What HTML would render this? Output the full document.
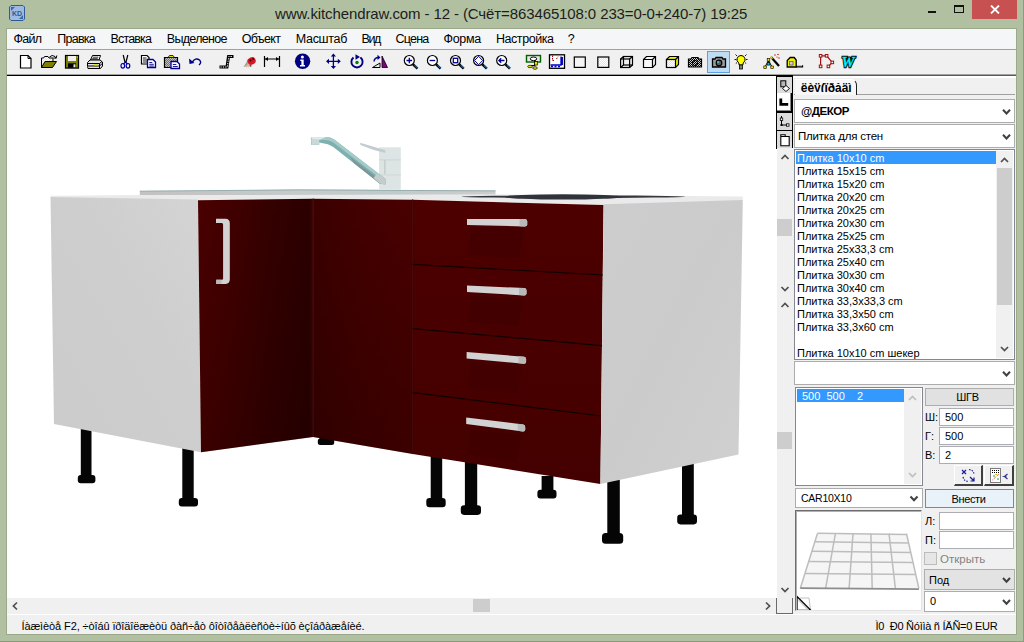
<!DOCTYPE html>
<html lang="ru">
<head>
<meta charset="utf-8">
<title>www.kitchendraw.com - 12</title>
<style>
*{box-sizing:border-box;margin:0;padding:0}
html,body{width:1024px;height:642px;overflow:hidden}
body{background:#b2c0a2;font-family:"Liberation Sans",sans-serif;font-size:11px;color:#000;position:relative}
.a{position:absolute}
.t{position:absolute;white-space:nowrap;line-height:1}
#title{left:275px;top:6px;font-size:15px;color:#1c1c1c;letter-spacing:-0.11px}
#menubar{left:7px;top:29px;width:1009px;height:20px;background:#f5f6f7}
#menubar .t{top:3.500px;font-size:12.5px}
#tbline{left:7px;top:49px;width:1009px;height:1px;background:#a0a0a0}
#toolbar{left:7px;top:50px;width:1009px;height:24px;background:#f0f0f0}
#tbdark{left:7px;top:74px;width:1009px;height:2px;background:#000;border-top:1px solid #a0a0a0}
#cframe{left:6px;top:28px;width:1011px;height:607px;background:#9ba98a}
#view{left:7px;top:76px;width:769px;height:522px;background:#fff}
#hscroll{left:7px;top:598px;width:769px;height:16px;background:#f0f0f0}
#status{left:7px;top:615px;width:1009px;height:19px;background:#f0f0f0}
#statusline{left:7px;top:614px;width:1009px;height:1px;background:#fff}
#panel{left:776px;top:76px;width:240px;height:538px;background:#f0f0f0}
.inp{position:absolute;background:#fff;border:1px solid #abadb3}
.cmb{position:absolute;background:#fff;border:1px solid #acacac}
.btn{position:absolute;background:#e1e1e1;border:1px solid #adadad;text-align:center}
.li{position:absolute;left:797px;white-space:nowrap;font-size:11px;line-height:13px;height:13px;margin-top:1px}
</style>
</head>
<body>

<!-- window chrome -->
<div class="a" style="left:1023px;top:0;width:1px;height:642px;background:#8d9b7d"></div>
<div class="a" style="left:0;top:641px;width:1024px;height:1px;background:#8d9b7d"></div>
<svg class="a" style="left:9px;top:5px" width="16" height="16" viewBox="0 0 16 16">
  <path d="M2 0.5h12l1.5 1.5v12l-1.5 1.5h-12l-1.5-1.5v-12z" fill="#9dbbe0" stroke="#2f5a97" stroke-width="1"/>
  <path d="M2 2h4l-4 4z" fill="#3a68a8"/><path d="M14 14h-4l4-4z" fill="#3a68a8"/>
  <text x="8" y="11" font-family="Liberation Sans, sans-serif" font-size="7" font-weight="bold" fill="#2f5a97" text-anchor="middle">KD</text>
</svg>
<div id="title" class="t">www.kitchendraw.com - 12 - (Счёт=863465108:0 233=0-0+240-7) 19:25</div>
<div class="a" style="left:928px;top:11px;width:8px;height:2px;background:#111"></div>
<div class="a" style="left:954px;top:5px;width:10px;height:8px;border:1px solid #111;border-top-width:2px"></div>
<div class="a" style="left:972px;top:0;width:45px;height:19px;background:#c75050"></div>
<svg class="a" style="left:990px;top:5px" width="10" height="9" viewBox="0 0 10 9"><path d="M1 0.5l8 8M9 0.5l-8 8" stroke="#fff" stroke-width="1.8"/></svg>
<div id="cframe" class="a"></div>
<div id="menubar" class="a">
  <span class="t" style="left:6.6px;letter-spacing:-0.74px">Файл</span>
  <span class="t" style="left:50.3px;letter-spacing:-0.75px">Правка</span>
  <span class="t" style="left:103.6px;letter-spacing:-0.86px">Вставка</span>
  <span class="t" style="left:159.8px;letter-spacing:-0.69px">Выделеное</span>
  <span class="t" style="left:234.7px;letter-spacing:-0.64px">Объект</span>
  <span class="t" style="left:288.8px;letter-spacing:-0.31px">Масштаб</span>
  <span class="t" style="left:354.6px;letter-spacing:-1.46px">Вид</span>
  <span class="t" style="left:388.6px;letter-spacing:-0.81px">Сцена</span>
  <span class="t" style="left:436.5px;letter-spacing:-0.34px">Форма</span>
  <span class="t" style="left:488.9px;letter-spacing:-0.42px">Настройка</span>
  <span class="t" style="left:560.7px;letter-spacing:0px">?</span>
</div>
<div id="tbline" class="a"></div>
<div id="toolbar" class="a"></div>
<div id="tbdark" class="a"></div>
<div id="view" class="a"></div>
<div id="hscroll" class="a"></div>
<div id="statusline" class="a"></div>
<div id="status" class="a">
  <span class="t" style="left:14.500px;top:5.500px;font-size:11px;letter-spacing:-0.110px">Íàæìèòå F2, ÷òîáû ïðîäîëæèòü ðàñ÷åò ôîòîðåàëèñòè÷íûõ èçîáðàæåíèé.</span>
  <span class="t" style="left:868.500px;top:5.500px;font-size:11px;letter-spacing:-0.260px">Ì0&nbsp; Ð0 Ñóììà ñ ÍÄÑ=0 EUR</span>
</div>
<div id="panel" class="a"></div>

<!-- toolbar icons -->
<svg class="a" style="left:7px;top:50px" width="1010" height="24" viewBox="7 50 1010 24">
  <defs>
    <pattern id="dy" width="2" height="2" patternUnits="userSpaceOnUse"><rect width="2" height="2" fill="#ffff00"/><rect width="1" height="1" fill="#fff"/><rect x="1" y="1" width="1" height="1" fill="#fff"/></pattern>
    <pattern id="dk" width="2" height="2" patternUnits="userSpaceOnUse"><rect width="2" height="2" fill="#808000"/><rect width="1" height="1" fill="#c0c0c0"/><rect x="1" y="1" width="1" height="1" fill="#c0c0c0"/></pattern>
    <pattern id="dc" width="2" height="2" patternUnits="userSpaceOnUse"><rect width="2" height="2" fill="#000"/><rect width="1" height="1" fill="#d0d0d0"/><rect x="1" y="1" width="1" height="1" fill="#d0d0d0"/></pattern>
  </defs>
  <!-- new -->
  <path d="M20.5 55.5h7.5l3 3v9.5h-10.500z" fill="#fff" stroke="#000" stroke-width="1.2"/><path d="M28 55.500v3h3" fill="none" stroke="#000" stroke-width="1"/>
  <!-- open -->
  <path d="M41.500 67.500v-9.500h2l1-1.500h3.500l1 1.500h4v3" fill="url(#dy)" stroke="#000" stroke-width="1"/>
  <path d="M41.500 67.500l3.500-6h11.500l-4 6z" fill="#808000" stroke="#000" stroke-width="1"/>
  <path d="M49.500 57q2.500-2.800 5.500-0.500l1 1.500m0.800-2.500l-0.600 2.800-2.700-0.500" fill="none" stroke="#000" stroke-width="1"/>
  <!-- save -->
  <rect x="65.500" y="55.500" width="13" height="12.600" fill="#808000" stroke="#000" stroke-width="1.200"/>
  <rect x="68" y="56" width="8" height="5" fill="#f0f0f0"/><rect x="68" y="63.300" width="8" height="4.500" fill="#000"/><rect x="73.500" y="64.300" width="2" height="3" fill="#e8e8e8"/><rect x="76.800" y="56.500" width="1" height="1.200" fill="#d0d0d0"/>
  <!-- print -->
  <path d="M90.500 60l2-4.500h8l-1.500 4.500z" fill="#fff" stroke="#000" stroke-width="1"/>
  <path d="M92.800 57.200h5.500M92.200 58.700h5.500" stroke="#000" stroke-width="0.800"/>
  <path d="M87.500 62.500l2.500-2.500h10l2.500 2v4l-2 2.500h-12.500l-0.500-2z" fill="#e4e4e4" stroke="#000" stroke-width="1"/>
  <path d="M88 63.500h11.500l2.500-2M88 66h11.500l2.500-2.200M99.500 63.500v5" fill="none" stroke="#000" stroke-width="1"/>
  <rect x="94" y="64.200" width="4" height="1.300" fill="#e0e000"/>
  <!-- cut -->
  <path d="M123.200 55l2 8M127.800 55l-2 8" stroke="#000" stroke-width="1.200" fill="none"/>
  <ellipse cx="122.800" cy="65.800" rx="1.800" ry="2.300" fill="none" stroke="#0000a0" stroke-width="1.200"/><ellipse cx="128" cy="65.800" rx="1.800" ry="2.300" fill="none" stroke="#0000a0" stroke-width="1.200"/>
  <path d="M125 62.500l-1.600 1.500M126 62.500l1.500 1.500" stroke="#0000a0" stroke-width="1.200"/>
  <!-- copy -->
  <path d="M141.500 55.500h5.500l2 2v6.500h-7.500z" fill="#fff" stroke="#000" stroke-width="1.200"/><path d="M143 58h3.500M143 60h4M143 62h4" stroke="#000" stroke-width="0.900"/>
  <path d="M147.500 59.500h5.500l2.500 2.500v5.500h-8z" fill="#fff" stroke="#000090" stroke-width="1.300"/><path d="M149.300 62.500h3M149.300 64.300h4.500M149.300 66h4.500" stroke="#000090" stroke-width="0.900"/>
  <!-- paste -->
  <path d="M164.500 57.500h13v10h-13z" fill="url(#dk)" stroke="#000" stroke-width="1.200"/>
  <path d="M168 57.500l1.500-2h3.500l1.500 2z" fill="#e8e000" stroke="#000" stroke-width="0.800"/>
  <path d="M171 61.500h6l2.500 2.500v4.500h-8.500z" fill="#fff" stroke="#000090" stroke-width="1.300"/><path d="M172.800 64.500h3.500M172.800 66.500h5" stroke="#000090" stroke-width="0.900"/>
  <!-- undo -->
  <path d="M192 62.500q3.500-5.500 7.500-2.500q2.500 2.500-0.500 5" fill="none" stroke="#000090" stroke-width="1.400"/><path d="M189 58.500l0.500 5.500 5-1z" fill="#000090"/>
  <!-- steps -->
  <path d="M219.500 67h7.500l1.500-10.500h5" fill="none" stroke="#000" stroke-width="3"/>
  <path d="M220.500 67h6.800l1.500-10.500h4" fill="none" stroke="#fff" stroke-width="1" stroke-dasharray="1.200 1.200"/>
  <!-- bug -->
  <path d="M245.500 56l1.500 5.500-3.500 5.500 4-1.500 1.500 2.500z" fill="#9a9a9a"/>
  <ellipse cx="251.500" cy="61" rx="4.300" ry="3.700" fill="#d01828" transform="rotate(-25 251.500 61)"/>
  <path d="M248.500 63.500l-3.500 2.500 1 1.500 3.500-2z" fill="#e8b090"/>
  <circle cx="250.500" cy="60.500" r="1" fill="#400"/><circle cx="253.200" cy="59" r="0.900" fill="#400"/><circle cx="250.500" cy="65.800" r="1.100" fill="#606060"/>
  <!-- dimension -->
  <path d="M264.500 56v11M279.500 56v11M265 59h14" stroke="#000" stroke-width="1.200" fill="none"/><path d="M265 59l3-2v4zM279 59l-3-2v4z" fill="#000"/>
  <!-- info -->
  <circle cx="302.600" cy="61.300" r="7.700" fill="#000080"/>
  <circle cx="302.400" cy="57" r="1.500" fill="#fff"/><path d="M300.300 59.500h3.400v5.600h1.300v1.400h-5v-1.400h1.400v-4.200h-1.100z" fill="#fff"/>
  <!-- move -->
  <path d="M333.400 55v12.500M327 61.300h12.800" stroke="#000080" stroke-width="1.300"/>
  <path d="M333.400 53.600l2.600 3h-5.200zM333.400 69l2.600-3h-5.200zM326 61.300l3-2.600v5.200zM340.800 61.300l-3-2.600v5.200z" fill="#000080"/>
  <!-- rotate -->
  <path d="M353.500 57.500a5.600 5.600 0 1 0 7 0" fill="none" stroke="#000080" stroke-width="1.900"/>
  <path d="M355.500 54.200l4.500 2.800-4.500 2.800z" fill="#000080"/><circle cx="357" cy="62.500" r="1.700" fill="#008000"/>
  <path d="M360.500 57.500l1.500 1.500" stroke="#000080" stroke-width="1" stroke-dasharray="1 1"/>
  <!-- mirror -->
  <path d="M372.500 67.500h7.500v-4.500z" fill="#f0f0f0" stroke="#000" stroke-width="1"/><path d="M382 67.500v-11.500l5.500 11.500z" fill="#800080" stroke="#000" stroke-width="0.800"/>
  <path d="M374 61.500q0.500-4 4.500-4" fill="none" stroke="#000090" stroke-width="1.400"/><path d="M377.500 54.800l3 2.700-3 2.500z" fill="#000090"/>
  <!-- zooms -->
  <g fill="#fff" stroke="#000" stroke-width="1.200">
    <circle cx="409.300" cy="60.500" r="5"/><circle cx="432.400" cy="60.500" r="5"/><circle cx="455.500" cy="60.500" r="5"/><circle cx="478.600" cy="60.500" r="5"/><circle cx="501.700" cy="60.500" r="5"/>
  </g>
  <g stroke="#000" stroke-width="2.400"><path d="M413 64.300l4.500 4.300M436.100 64.300l4.500 4.300M459.200 64.300l4.500 4.300M482.300 64.300l4.500 4.300M505.400 64.300l4.500 4.300"/></g>
  <g stroke="#0060c0" stroke-width="1.200"><path d="M414.500 65.300l3.200 3.100M437.600 65.300l3.200 3.100M460.700 65.300l3.200 3.100M483.800 65.300l3.200 3.100M506.900 65.300l3.200 3.100"/></g>
  <g stroke="#000090" stroke-width="1.300" fill="none">
    <path d="M406.500 60.500h5.600M409.300 57.700v5.600"/>
    <path d="M429.600 60.500h5.600"/>
    <rect x="453.300" y="58.300" width="4.400" height="4.400"/>
    <path d="M478.600 56.300l4 4.200-4 4.200-4-4.200z" stroke-width="1"/>
    <path d="M499 60.500h5.500M501.200 58.300l-2.300 2.200 2.300 2.200"/>
  </g>
  <!-- icon A -->
  <rect x="526.500" y="55.500" width="14" height="6.500" fill="#e8e8e8" stroke="#006000" stroke-width="1.400"/>
  <ellipse cx="533.500" cy="58.800" rx="3.200" ry="1.800" fill="#fff" stroke="#000" stroke-width="1"/>
  <path d="M535 60v5.500h-4" fill="none" stroke="#000" stroke-width="1"/>
  <rect x="534.500" y="61.500" width="3" height="3.500" fill="#e8e000" stroke="#000" stroke-width="0.700"/><ellipse cx="530" cy="66.500" rx="2.300" ry="1.200" fill="#e8e000" stroke="#000" stroke-width="0.700"/><ellipse cx="535" cy="68" rx="2.300" ry="1.300" fill="#e8e000" stroke="#000" stroke-width="0.700"/>
  <!-- icon B -->
  <rect x="549.500" y="54.800" width="15" height="13.500" fill="#fff" stroke="#000" stroke-width="1.300"/>
  <path d="M552.500 55.500v5h2.500M556.500 59l1.500-2.500" fill="none" stroke="#a00000" stroke-width="1" stroke-dasharray="1.500 1"/>
  <path d="M550.500 65h10.500v-8.500M562.300 57v8" fill="none" stroke="#0000c0" stroke-width="1.300"/><path d="M551 66.500h2M554.500 66.500h2M558 66.500h2" stroke="#0000c0" stroke-width="1.600"/>
  <!-- squares -->
  <rect x="574.300" y="57" width="11" height="10.400" fill="#f4f4f4" stroke="#000" stroke-width="1.200"/>
  <rect x="597.800" y="57" width="11" height="10.400" fill="url(#dy)" stroke="#000" stroke-width="1.200"/>
  <!-- wire cube -->
  <g fill="none" stroke="#000" stroke-width="1.200"><rect x="620.600" y="59" width="9" height="8.500"/><rect x="623.500" y="56.500" width="9" height="8.500"/><path d="M620.600 59l2.900-2.500M629.600 59l2.900-2.500M620.600 67.500l2.900-2.500M629.600 67.500l2.900-2.500"/></g>
  <!-- white cube -->
  <path d="M643.500 59.500l3-3h9v8l-3 3h-9z" fill="#f8f8f8" stroke="#000" stroke-width="1.200"/><path d="M643.500 59.500h9v8M652.500 59.500l3-3" fill="none" stroke="#000" stroke-width="1.200"/>
  <!-- yellow cube -->
  <path d="M666.500 59.500l3-3h9v8l-3 3h-9z" fill="#f0f000" stroke="#000" stroke-width="1.200"/><rect x="666.500" y="59.500" width="9" height="8" fill="url(#dy)" stroke="#000" stroke-width="1.200"/><path d="M675.500 59.500l3-3" stroke="#000" stroke-width="1.200"/>
  <!-- camera dithered -->
  <path d="M688.500 59h2.500l1-1.500h6l1 1.500h2.500v8h-13z" fill="url(#dc)" stroke="#000" stroke-width="1.200"/><circle cx="695" cy="63" r="2.600" fill="url(#dc)" stroke="#000" stroke-width="1"/>
  <!-- selected camera -->
  <rect x="707.500" y="51.500" width="22" height="21" fill="#c0dcf3" stroke="#5aa0e6" stroke-width="1"/>
  <path d="M712.500 59h2.500l1-1.500h6l1 1.500h2.500v8h-13z" fill="#9a9a9a" stroke="#000" stroke-width="1.300"/><circle cx="719" cy="63" r="2.800" fill="#606060" stroke="#000" stroke-width="1.200"/><circle cx="718" cy="62" r="0.900" fill="#40e0e0"/>
  <!-- bulb -->
  <path d="M741 55.500a4 4 0 0 1 2.300 7.300l-0.500 2.200h-3.600l-0.500-2.200a4 4 0 0 1 2.300-7.300z" fill="#ffff00" stroke="#000" stroke-width="1"/>
  <rect x="739.600" y="65" width="2.800" height="4" fill="#808080" stroke="#000" stroke-width="0.800"/>
  <path d="M734.500 59.500h1.800M745.800 59.500h1.800M735.500 54.500l1.500 1.500M746.500 54.500l-1.500 1.500M735.800 63.500l1.300-1M746.200 63.500l-1.300-1" stroke="#000" stroke-width="0.900"/>
  <!-- wand -->
  <path d="M771 57l8 9" stroke="#000" stroke-width="2.200"/><path d="M770.500 56.500l2 2.200" stroke="#f0e000" stroke-width="1.500"/>
  <path d="M768.500 60.500l-3.500 6.500M768.500 60.500l3.500 6.500M768.500 60.500v3" stroke="#000" stroke-width="1" fill="none"/>
  <rect x="763.800" y="66" width="2.600" height="2.600" fill="#f0e000" stroke="#000" stroke-width="0.600"/><rect x="770.800" y="66" width="2.600" height="2.600" fill="#f0e000" stroke="#000" stroke-width="0.600"/><rect x="767.200" y="62.500" width="2.600" height="2.600" fill="#00c0e0" stroke="#000" stroke-width="0.600"/><rect x="767.200" y="58.500" width="2.600" height="2.600" fill="#f0e000" stroke="#000" stroke-width="0.600"/>
  <circle cx="775" cy="55" r="0.700" fill="#c00000"/><circle cx="778" cy="54.500" r="0.700" fill="#c00000"/><circle cx="779" cy="58" r="0.700" fill="#c00000"/><circle cx="777" cy="57" r="0.600" fill="#c00000"/>
  <!-- tape -->
  <path d="M787.200 67v-6.500l3-3h4l2 2.500v7z" fill="#f0f000" stroke="#000" stroke-width="1.300"/><rect x="789.500" y="61.500" width="3.500" height="3.500" fill="#d0d0d0" stroke="#606060" stroke-width="0.800"/>
  <path d="M796 66.800h6.500v-1.500" fill="none" stroke="#000" stroke-width="1.300"/><path d="M797 65.500h4.500" stroke="#c0c0c0" stroke-width="1"/>
  <!-- red polygon -->
  <path d="M820.600 66.400v-10.600h6l5.700 6.600-3.900 4" fill="none" stroke="#a01010" stroke-width="1.200"/>
  <g fill="#f4f4f4" stroke="#a01010" stroke-width="1"><rect x="819.300" y="54.500" width="2.600" height="2.600"/><rect x="825.300" y="54.500" width="2.600" height="2.600"/><rect x="831" y="61.100" width="2.600" height="2.600"/><rect x="827.100" y="65.100" width="2.600" height="2.600"/><rect x="819.300" y="65.100" width="2.600" height="2.600"/></g>
  <!-- W -->
  <text x="841.500" y="66.800" font-family="Liberation Serif, serif" font-size="15" font-weight="bold" font-style="italic" fill="#000" stroke="#000" stroke-width="2.400" textLength="13" lengthAdjust="spacingAndGlyphs">W</text><text x="841.500" y="66.800" font-family="Liberation Serif, serif" font-size="15" font-weight="bold" font-style="italic" fill="#00f0f8" stroke="#00f0f8" stroke-width="0.300" textLength="13" lengthAdjust="spacingAndGlyphs">W</text>
</svg>

<!-- 3D scene -->
<svg class="a" style="left:7px;top:76px" width="769" height="522" viewBox="7 76 769 522">
  <defs>
    <linearGradient id="gDoor" x1="0" y1="0" x2="1" y2="0">
      <stop offset="0" stop-color="#4a0000"/><stop offset="0.25" stop-color="#430000"/><stop offset="0.6" stop-color="#360000"/><stop offset="0.97" stop-color="#2c0000"/><stop offset="1" stop-color="#3a0606"/>
    </linearGradient>
    <linearGradient id="gFill" x1="0" y1="0" x2="1" y2="0">
      <stop offset="0" stop-color="#3b0000"/><stop offset="0.5" stop-color="#440000"/><stop offset="1" stop-color="#490000"/>
    </linearGradient>
    <linearGradient id="gDraw" x1="0" y1="0" x2="0" y2="1">
      <stop offset="0" stop-color="#4d0000"/><stop offset="1" stop-color="#440000"/>
    </linearGradient>
    <linearGradient id="gShade" x1="0" y1="0" x2="0" y2="1">
      <stop offset="0" stop-color="#000" stop-opacity="0"/><stop offset="1" stop-color="#000" stop-opacity="0.2"/>
    </linearGradient>
    <linearGradient id="gSideL" x1="0" y1="1" x2="1" y2="0">
      <stop offset="0" stop-color="#cbcbcb"/><stop offset="0.6" stop-color="#cecece"/><stop offset="1" stop-color="#d4d4d4"/>
    </linearGradient>
    <linearGradient id="gSideR" x1="0" y1="0" x2="1" y2="1">
      <stop offset="0" stop-color="#cdcdcd"/><stop offset="0.5" stop-color="#cbcbcb"/><stop offset="1" stop-color="#d0d0d0"/>
    </linearGradient>
    <linearGradient id="gRim" x1="0" y1="0" x2="1" y2="0">
      <stop offset="0" stop-color="#c2c2c2"/><stop offset="0.45" stop-color="#c6caca"/><stop offset="0.7" stop-color="#c0caca"/><stop offset="1" stop-color="#cccccc"/>
    </linearGradient>
  </defs>
  <!-- legs (behind) -->
  <g fill="#050505">
    <rect x="80.8" y="428" width="10.7" height="50"/><rect x="77.8" y="475" width="17.6" height="8.2" rx="3"/>
    <rect x="182.3" y="448" width="11.4" height="52"/><rect x="178.8" y="498" width="19.2" height="8.6" rx="3"/>
    <rect x="319.5" y="436" width="13" height="5"/><rect x="317.8" y="438.5" width="16.4" height="6.5" rx="2.5"/>
    <rect x="430.7" y="455" width="11.5" height="46"/><rect x="426.3" y="498" width="19.4" height="9.2" rx="3.2"/>
    <rect x="464.9" y="462" width="12.3" height="46"/><rect x="460.8" y="505.3" width="20.2" height="9.6" rx="3.3"/>
    <rect x="541.6" y="476" width="11.8" height="16"/><rect x="537.4" y="489.7" width="19.1" height="8.8" rx="3"/>
    <rect x="607.3" y="480" width="12.5" height="56"/><rect x="602" y="533" width="21.2" height="10.8" rx="3.6"/>
    <rect x="682" y="462" width="11.8" height="55"/><rect x="677.2" y="514.6" width="19.8" height="9.8" rx="3.3"/>
  </g>
  <!-- worktop strip -->
  <polygon points="50.5,195.8 140,195 495,194.4 742.8,196.6 742.8,201 603.6,205 412.7,200 313,199 198,200.5 50.5,198" fill="#eaeaea"/>
  <!-- sink rim -->
  <polygon points="139.8,190.9 300,189.6 495.5,190.6 495.5,194.6 139.8,195.1" fill="url(#gRim)"/>
  <polyline points="139.8,191.2 300,189.9 495.5,190.9" fill="none" stroke="#98aeae" stroke-width="1"/>
  <!-- hob -->
  <ellipse cx="573.3" cy="196.700" rx="111.800" ry="1.300" fill="#34383c"/>
  <ellipse cx="563" cy="196.900" rx="58" ry="2.700" fill="#30343a"/>
  <!-- left side panel -->
  <polygon points="50.5,197 198,199.6 201,452.3 54,424" fill="url(#gSideL)"/>
  <!-- left door -->
  <polygon points="198,200.300 313,198.800 313,437 201,452.300" fill="url(#gDoor)"/>
  <!-- filler -->
  <polygon points="313,198.800 412.700,199.800 412.700,454.100 313,437" fill="url(#gFill)"/>
  <line x1="313.2" y1="198.3" x2="313.2" y2="437" stroke="#5a1010" stroke-width="0.8"/>
  <polygon points="198,200 313,198.3 412.7,199.3 412.7,454.1 313,437 201,452.3" fill="url(#gShade)"/>
  <!-- drawers -->
  <polygon points="412.700,199.800 603.500,205 600.400,484 412.700,454.100" fill="url(#gDraw)"/>
  <line x1="412.7" y1="199.3" x2="412.7" y2="454.1" stroke="#3c0000" stroke-width="1"/>
  <g stroke="#120000" stroke-width="1.2">
    <line x1="412.7" y1="264.4" x2="603" y2="275"/>
    <line x1="412.7" y1="328.6" x2="602" y2="345.7"/>
    <line x1="412.7" y1="392.6" x2="601" y2="416"/>
  </g>
  <!-- handle shadows -->
  <g fill="#3c0000" opacity="0.450">
    <polygon points="471,227 525,228 519,258 468,255"/>
    <polygon points="471,296 524,298 518,326 468,322"/>
    <polygon points="471,363 523,367 517,394 468,388"/>
    <polygon points="470,430 522,435 516,462 468,454"/>
  </g>
  <!-- right side panel -->
  <polygon points="603.7,204.2 742.8,200.1 738.5,454.4 600.4,484" fill="url(#gSideR)"/>
  <!-- handles -->
  <g fill="#d2d2d2">
    <path d="M216 218.8h9.5q4.3 0 4.3 4.5v56q0 4.6 -4.3 4.6h-9.2v-4.2h5.5q1.3 0 1.3 -1.5v-53.5q0 -1.6 -1.3 -1.6h-5.8z"/>
    <path d="M467 219h58q2.2 0 2.2 2.6v2.6q0 2.2 -2.6 2.2l-57.6 -1.4z"/>
    <path d="M467 285.5l57.5 2.6q2 0.2 2 2.6v2.5q0 2.3 -2.5 2.2l-57 -3.4z"/>
    <path d="M466.6 352l57.5 4.8q2 0.2 2 2.6v2.4q0 2.2 -2.5 2l-57 -5.4z"/>
    <path d="M466.2 417.6l57 6.8q2 0.3 2 2.7v2.5q0 2.2 -2.5 1.9l-56.5 -7.4z"/>
  </g>
  <g fill="#b9b9b9">
    <path d="M519.500 219h5.500q2.200 0 2.200 2.600v2.600q0 2.200 -2.600 2.200l-5.100 -0.100z"/>
    <path d="M519 287.900l5.500 0.200q2 0.200 2 2.600v2.500q0 2.300 -2.500 2.200l-5 -0.300z"/>
    <path d="M518.500 356.300l5.600 0.500q2 0.200 2 2.600v2.400q0 2.200 -2.500 2l-5.100 -0.500z"/>
    <path d="M517.700 423.700l5.500 0.700q2 0.300 2 2.700v2.500q0 2.200 -2.500 1.900l-5 -0.700z"/>
    <path d="M216.300 279.700h5.200v4.200h-5.200z"/>
  </g>
  <!-- faucet -->
  <rect x="379.1" y="147.3" width="21.7" height="42.4" fill="#dde4e4"/>
  <rect x="379.1" y="159.3" width="21.7" height="1.2" fill="#cdd6d6"/>
  <rect x="379.1" y="174.3" width="21.7" height="1.2" fill="#d0d9d9"/>
  <rect x="384" y="160" width="1.6" height="14" fill="#c4cfcf"/>
  <polygon points="360,142.8 385.4,150.2 385.4,153 373,149.8 360.6,145" fill="#c2ccd0"/>
  <path d="M310.8 138.6q0 -1.6 2.5 -1.6h13q4.8 0.2 8.6 3l51 39.2 -0.3 5.4 -5.8 -0.9 -43 -34q-4.5 -3.6 -9 -5.4l-8.6 -1.9v2.3h-8.2v-4z" fill="#7fb0b0"/>
  <path d="M312 137h14.3q4.8 0.2 8.6 3l51 39.2 -1.6 2.2 -51 -38.9q-3.5 -2.4 -7.6 -2.6l-13.8 -0.4z" fill="#a6caca"/>
  <path d="M350 157l33 25.5 -2.6 1.5 -26 -20.5z" fill="#7d9696"/>
  <polygon points="311.2,139.4 319.2,139.8 319.2,144.7 311.5,144.7" fill="#c9d9d9"/>
  <polygon points="312,137 326,137 320,139.8 311.2,139.4" fill="#dde9e9"/>
  <polygon points="377,173.5 385.9,179.2 385.6,184.6 380.3,183.8 373.5,178" fill="#c4cccc"/>
</svg>

<!-- right panel -->
<div class="a" style="left:793px;top:76px;width:223px;height:2px;background:#fff"></div>
<div class="a" style="left:793px;top:74px;width:223px;height:2px;background:#5a5a5a;border-top:1px solid #a0a0a0"></div>
<div class="a" style="left:776px;top:76px;width:1px;height:538px;background:#fff"></div>
<!-- vertical tool strip -->
<div class="a" style="left:776px;top:76px;width:17px;height:73px;background:#000"></div>
<div class="a" style="left:777px;top:77px;width:15px;height:16px;background:#dcdcdc"></div>
<div class="a" style="left:777px;top:93px;width:14px;height:18px;background:#fff;border-bottom:1px solid #888;border-right:1px solid #888"></div>
<div class="a" style="left:777px;top:113px;width:15px;height:17px;background:#dcdcdc"></div>
<div class="a" style="left:777px;top:131px;width:15px;height:17px;background:#dcdcdc"></div>
<svg class="a" style="left:777px;top:76px" width="16" height="73" viewBox="777 76 16 73">
  <rect x="780.8" y="80.8" width="5" height="6" fill="#b8b8b8" stroke="#000" stroke-width="1"/>
  <path d="M782.5 88.500l3.500-3 3.500 3-3.500 3z" fill="#fff" stroke="#000" stroke-width="0.900"/>
  <path d="M780.800 98.500v5.800h7.400" fill="none" stroke="#000" stroke-width="2.800"/>
  <path d="M781.500 116v9h6.500" fill="none" stroke="#000" stroke-width="1"/><rect x="780.300" y="118" width="2.400" height="2.400" fill="#fff" stroke="#000" stroke-width="0.800"/><rect x="786.600" y="123.800" width="2.400" height="2.400" fill="#fff" stroke="#000" stroke-width="0.800"/><rect x="780.500" y="124" width="2" height="2" fill="#000"/>
  <path d="M780.800 136.500h8.400v9.300h-8.400zM780.800 136.500v-1.700h4.400v1.700" fill="#fff" stroke="#000" stroke-width="1.100"/>
</svg>
<!-- scroll strips -->
<div class="a" style="left:777px;top:148px;width:16px;height:466px;background:#f0f0f0"></div>
<div class="a" style="left:777px;top:219px;width:15px;height:17px;background:#cdcdcd"></div>
<div class="a" style="left:777px;top:432px;width:15px;height:17px;background:#cdcdcd"></div>
<svg class="a" style="left:777px;top:148px" width="16" height="466" viewBox="0 0 16 466" fill="none" stroke="#505050" stroke-width="1.7">
  <path d="M4.5 11l3.5 -3.6 3.5 3.6"/>
  <path d="M4.5 139l3.5 3.6 3.5 -3.6"/>
  <path d="M4.5 159l3.5 -3.6 3.5 3.6"/>
  <path d="M4.5 440l3.5 3.6 3.5 -3.6"/>
</svg>
<div class="a" style="left:776px;top:598px;width:17px;height:16px;border:1px solid #6a6a6a;border-top:none;background:#f0f0f0"></div>
<!-- tab -->
<div class="a" style="left:794px;top:94px;width:221px;height:1px;background:#a0a0a0"></div>
<div class="a" style="left:795px;top:79px;width:62px;height:16px;background:#f7f7f7;border-top:1px solid #fff;border-right:1.500px solid #202020;border-radius:0 6px 0 0"></div>
<div class="a" style="left:796px;top:83px;width:58px;height:9.400px;overflow:hidden">
  <span class="t" style="left:4.800px;top:-1px;font-size:12px;font-weight:bold;letter-spacing:-0.060px">ëèÿ(ïðåäì</span>
</div>
<!-- combos -->
<div class="cmb" style="left:794px;top:99px;width:221px;height:24px"><span class="t" style="left:6px;top:5.500px;font-size:11.500px;font-weight:bold;letter-spacing:-0.450px">@ДЕКОР</span></div>
<div class="cmb" style="left:794px;top:124px;width:221px;height:24px"><span class="t" style="left:3px;top:5.500px;font-size:11.500px;letter-spacing:-0.200px">Плитка для стен</span></div>
<!-- main list -->
<div class="a" style="left:794px;top:149px;width:221px;height:211px;background:#fff;border:1px solid #828790"></div>
<div class="a" style="left:796px;top:151px;width:200px;height:13px;background:#3399ff"></div>
<div class="a" style="left:996px;top:151px;width:17px;height:207px;background:#f0f0f0"></div>
<div class="a" style="left:997px;top:168px;width:15px;height:137px;background:#cdcdcd"></div>
<svg class="a" style="left:996px;top:151px" width="17" height="207" viewBox="0 0 17 207" fill="none" stroke="#505050" stroke-width="1.7">
  <path d="M5 11l3.5 -3.6 3.5 3.6"/><path d="M5 196l3.5 3.6 3.5 -3.6"/>
</svg>
<div class="li" style="top:151px;color:#fff">Плитка 10x10 cm</div>
<div class="li" style="top:164px">Плитка 15x15 cm</div>
<div class="li" style="top:177px">Плитка 15x20 cm</div>
<div class="li" style="top:190px">Плитка 20x20 cm</div>
<div class="li" style="top:203px">Плитка 20x25 cm</div>
<div class="li" style="top:216px">Плитка 20x30 cm</div>
<div class="li" style="top:229px">Плитка 25x25 cm</div>
<div class="li" style="top:242px">Плитка 25x33,3 cm</div>
<div class="li" style="top:255px">Плитка 25x40 cm</div>
<div class="li" style="top:268px">Плитка 30x30 cm</div>
<div class="li" style="top:281px">Плитка 30x40 cm</div>
<div class="li" style="top:294px">Плитка 33,3x33,3 cm</div>
<div class="li" style="top:307px">Плитка 33,3x50 cm</div>
<div class="li" style="top:320px">Плитка 33,3x60 cm</div>
<div class="li" style="top:346px">Плитка 10x10 cm шекер</div>
<!-- empty combo -->
<div class="cmb" style="left:794px;top:361px;width:221px;height:24px"></div>
<!-- small list -->
<div class="a" style="left:795px;top:387px;width:128px;height:99px;background:#fff;border:1px solid #828790"></div>
<div class="a" style="left:797px;top:389px;width:107px;height:13px;background:#3399ff"></div>
<div class="a" style="left:904px;top:389px;width:17px;height:95px;background:#f0f0f0"></div>
<svg class="a" style="left:904px;top:389px" width="17" height="95" viewBox="0 0 17 95" fill="none" stroke="#bfbfbf" stroke-width="1.7">
  <path d="M5 11l3.5 -3.6 3.5 3.6"/><path d="M5 84l3.5 3.6 3.5 -3.6"/>
</svg>
<div class="li" style="left:802px;top:389px;color:#fff;white-space:pre">500  500    2</div>
<!-- right column -->
<div class="btn" style="left:925px;top:388px;width:89px;height:18px"><span class="t" style="left:-2px;width:87px;top:3px;font-size:11px;letter-spacing:-0.300px;text-align:center">ШГВ</span></div>
<span class="t" style="left:925px;top:412px;font-size:11px">Ш:</span>
<div class="inp" style="left:939px;top:408px;width:75px;height:18px"><span class="t" style="left:5px;top:3px;font-size:11px">500</span></div>
<span class="t" style="left:925px;top:431px;font-size:11px">Г:</span>
<div class="inp" style="left:939px;top:427px;width:75px;height:18px"><span class="t" style="left:5px;top:3px;font-size:11px">500</span></div>
<span class="t" style="left:925px;top:450px;font-size:11px">В:</span>
<div class="inp" style="left:939px;top:446px;width:75px;height:18px"><span class="t" style="left:5px;top:3px;font-size:11px">2</span></div>
<!-- icon buttons -->
<div class="a" style="left:954px;top:465px;width:29px;height:21px;background:#f0f0f0;border-top:1px solid #fff;border-left:1px solid #fff;border-right:2px solid #404040;border-bottom:2px solid #404040"></div>
<div class="a" style="left:984px;top:465px;width:30px;height:21px;background:#f0f0f0;border-top:1px solid #fff;border-left:1px solid #fff;border-right:2px solid #404040;border-bottom:2px solid #404040"></div>
<svg class="a" style="left:961px;top:468px" width="15" height="15" viewBox="0 0 15 15" fill="none" stroke="#1a1a9a" stroke-width="1.2">
  <path d="M1 2l4 4M5 2l-4 4"/><path d="M8 1.5q4 0.5 5 4" stroke-dasharray="1.5 1.2"/><path d="M2 9q1 4 5 4.5" stroke-dasharray="1.5 1.2"/><path d="M9 9l4 4M13 9.5v3.5h-3.5"/>
</svg>
<svg class="a" style="left:989px;top:467px" width="22" height="17" viewBox="989 467 22 17">
  <rect x="990.500" y="468.500" width="10" height="14" fill="#fff" stroke="#000" stroke-width="1" stroke-dasharray="1 1"/>
  <path d="M992 470.500h7M992 472.500h7" stroke="#000" stroke-width="1" stroke-dasharray="1 1"/>
  <path d="M992.500 480l6.500-6" stroke="#c03030" stroke-width="1" stroke-dasharray="1 1"/><path d="M993 476h2M997 479h2" stroke="#20a040" stroke-width="1"/><path d="M995 474.500h2" stroke="#e0c000" stroke-width="1"/>
  <path d="M1007.500 474l-3 2.500 3 2.500" fill="none" stroke="#303080" stroke-width="1.200"/><path d="M1002.500 476.500h4" stroke="#303080" stroke-width="0.800"/>
</svg>
<!-- CAR combo & Внести -->
<div class="cmb" style="left:795px;top:488px;width:128px;height:20px"><span class="t" style="left:5px;top:4px;font-size:10.500px;letter-spacing:-0.250px">CAR10X10</span></div>
<div class="btn" style="left:925px;top:489px;width:89px;height:19px;border-color:#3399ff;background:#e9f1f9"><span class="t" style="left:-1px;width:87px;top:3.500px;font-size:11px;letter-spacing:-0.400px;text-align:center">Внести</span></div>
<!-- preview -->
<div class="a" style="left:795px;top:510px;width:127px;height:101px;background:#fff;border:1px solid #e3e3e3;border-top:1px solid #6e6e6e;border-left:1px solid #6e6e6e;box-shadow:inset 1px 1px 0 #b0b0b0"></div>
<svg class="a" style="left:797px;top:512px" width="124" height="98" viewBox="797 512 124 98">
  <polygon points="817.400,533.300 906.500,534.500 918.900,589 800.300,588.100" fill="#f5f5f5"/>
  <g stroke="#bdbdbd" stroke-width="1.500" fill="none">
    <path d="M817.4,533.3 906.5,534.5"/>
    <path d="M814.7,541.8 908.4,543.0"/>
    <path d="M811.8,551.3 910.6,552.4"/>
    <path d="M808.6,561.5 912.9,562.5"/>
    <path d="M804.9,573.5 915.6,574.5"/>
    <path d="M817.4,533.6 800.3,588.4"/>
    <path d="M835.4,533.6 825.6,588.4"/>
    <path d="M853.0,533.6 849.1,588.4"/>
    <path d="M870.9,533.6 872.2,588.4"/>
    <path d="M889.0,533.6 895.4,588.4"/>
    <path d="M906.5,533.6 918.9,588.4"/>
  </g>
  <path d="M800.300,588.200 918.900,589.100" stroke="#8c8c8c" stroke-width="1.800"/>
  <path d="M800,598h9l1.500,12" fill="none" stroke="#b0b0b0" stroke-width="0.800"/><path d="M797,596.500l14,14h-14z" fill="#fff" stroke="#000" stroke-width="1.300"/><path d="M798.500,600l10,10" stroke="#c0c0c0" stroke-width="1.200"/>
</svg>
<span class="t" style="left:925px;top:516px;font-size:11px">Л:</span>
<div class="inp" style="left:939px;top:512px;width:75px;height:18px"></div>
<span class="t" style="left:925px;top:535px;font-size:11px">П:</span>
<div class="inp" style="left:939px;top:531px;width:75px;height:18px"></div>
<div class="a" style="left:924px;top:552px;width:13px;height:13px;background:#e6e6e6;border:1px solid #bcbcbc"></div>
<span class="t" style="left:940px;top:554px;font-size:11.500px;color:#838383">Открыть</span>
<div class="cmb" style="left:924px;top:569px;width:91px;height:21px;background:#e3e3e3;border-color:#adadad"><span class="t" style="left:4px;top:5px;font-size:11px">Под</span></div>
<div class="cmb" style="left:924px;top:591px;width:91px;height:21px"><span class="t" style="left:5px;top:4px;font-size:11px">0</span></div>
<!-- combo arrows -->
<svg class="a" style="left:0;top:0;pointer-events:none" width="1024" height="642" viewBox="0 0 1024 642" fill="none" stroke="#404040" stroke-width="2">
  <path d="M1003,109.700 l3.500,3.800 3.500,-3.800"/>
  <path d="M1003,134.700 l3.500,3.800 3.500,-3.800"/>
  <path d="M1003,371.700 l3.500,3.800 3.500,-3.800"/>
  <path d="M910.500,496.500 l3.500,3.800 3.500,-3.800"/>
  <path d="M1003,578 l3.500,3.800 3.500,-3.800"/>
  <path d="M1003,600 l3.500,3.800 3.500,-3.800"/>
</svg>
<!-- hscroll arrows & thumb -->
<div class="a" style="left:473px;top:599px;width:17px;height:13px;background:#cdcdcd"></div>
<svg class="a" style="left:7px;top:598px" width="769" height="16" viewBox="0 0 769 16" fill="none" stroke="#505050" stroke-width="1.7">
  <path d="M10 4.5l-3.6 3.5 3.6 3.5"/><path d="M759 4.5l3.6 3.5 -3.6 3.5"/>
</svg>

</body>
</html>
